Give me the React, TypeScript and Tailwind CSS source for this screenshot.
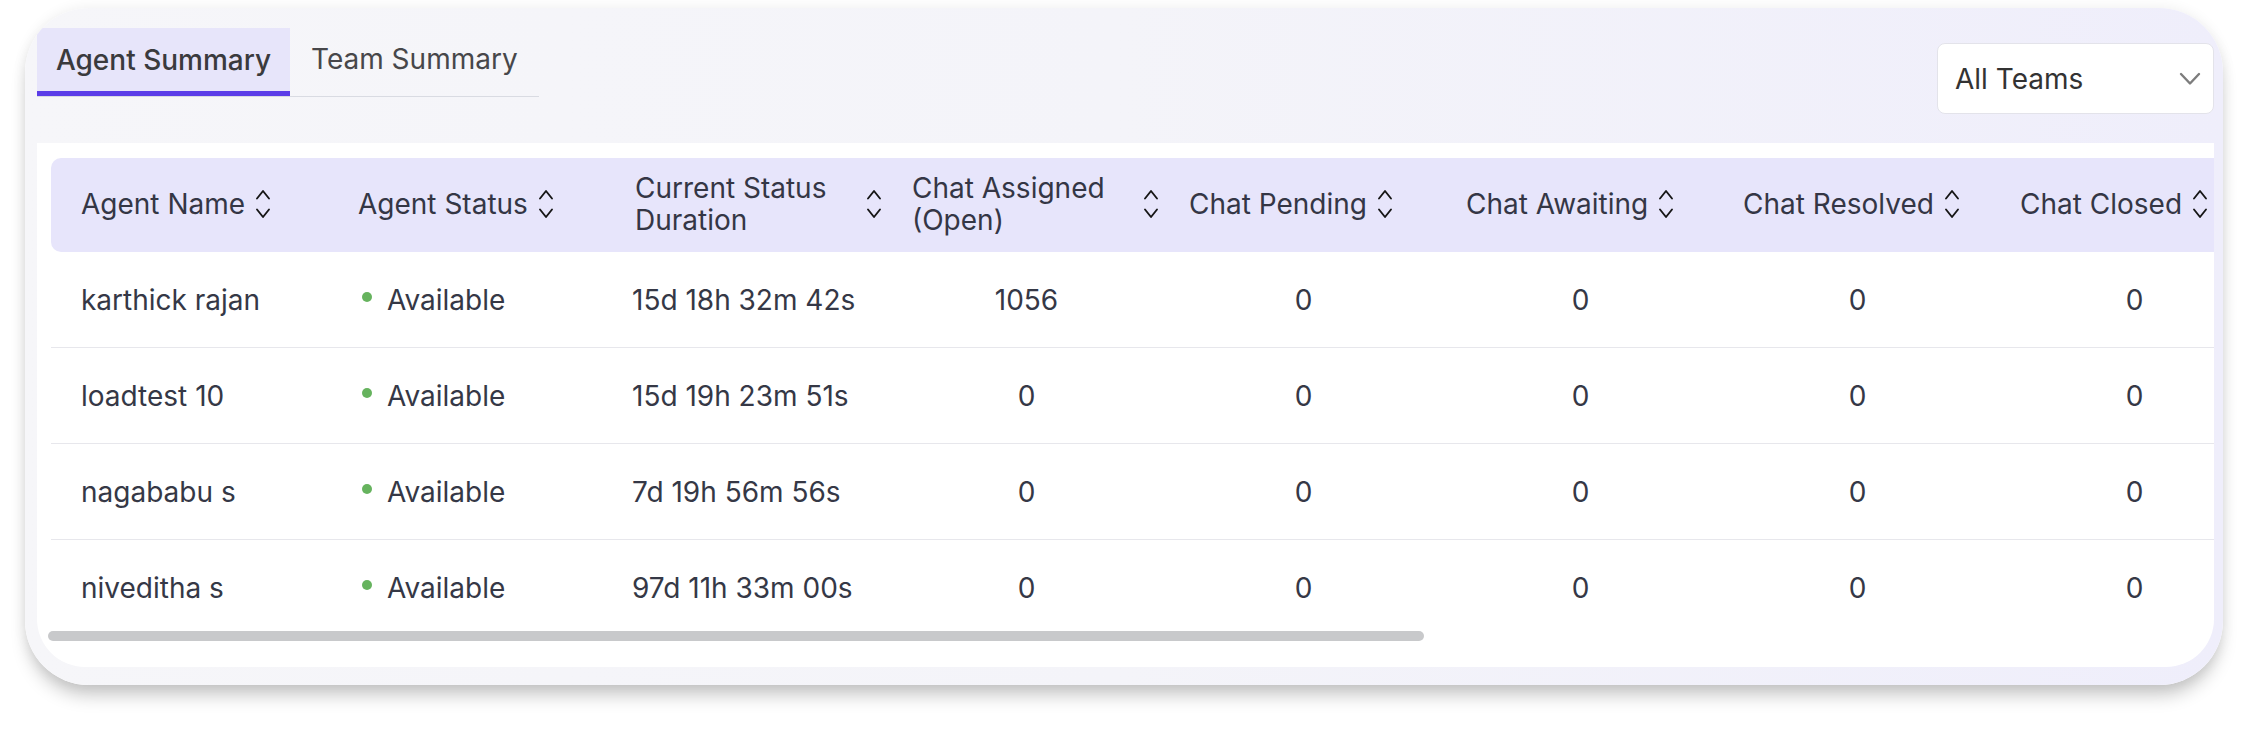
import React from "react";

const headers = [
  "Agent Name",
  "Agent Status",
  "Current Status Duration",
  "Chat Assigned (Open)",
  "Chat Pending",
  "Chat Awaiting",
  "Chat Resolved",
  "Chat Closed",
];

const rows = [
  { name: "karthick rajan", dur: "15d 18h 32m 42s", nums: ["1056", "0", "0", "0", "0"] },
  { name: "loadtest 10", dur: "15d 19h 23m 51s", nums: ["0", "0", "0", "0", "0"] },
  { name: "nagababu s", dur: "7d 19h 56m 56s", nums: ["0", "0", "0", "0", "0"] },
  { name: "niveditha s", dur: "97d 11h 33m 00s", nums: ["0", "0", "0", "0", "0"] },
];

function SortIcon() {
  return (
    <svg width="16" height="30" viewBox="0 0 16 30" className="shrink-0" fill="none">
      <path d="M2 9.5 L8 2 L14 9.5" stroke="#161616" strokeWidth="1.9" strokeLinecap="round" strokeLinejoin="round" />
      <path d="M2 20.5 L8 28 L14 20.5" stroke="#161616" strokeWidth="1.9" strokeLinecap="round" strokeLinejoin="round" />
    </svg>
  );
}

export default function App() {
  return (
    <div className="w-[2251px] h-[730px] bg-white pt-[8px] pl-[25px] font-['Inter','Noto_Sans',sans-serif]">
      <div className="w-[2198px] h-[677px] rounded-[64px] overflow-hidden bg-gradient-to-r from-[#f6f6f9] via-[#f4f4f9] to-[#efeefb] shadow-[0_14px_18px_-4px_rgba(0,0,0,0.22),0_0_14px_rgba(0,0,0,0.07)] pt-[20px] pl-[12px] pr-[9px] flex flex-col">
        {/* top row */}
        <div className="flex items-start justify-between h-[86px]">
          <div className="flex border-b border-[#d9dbe2] w-[502px]">
            <div className="h-[68px] w-[253px] bg-[#e7e5fa] border-b-[5px] border-[#5b3de8] -mb-px flex items-center justify-center text-[28px] font-medium text-[#3a3a3d]">
              Agent Summary
            </div>
            <div className="h-[68px] pl-[21px] pb-[6px] flex items-center text-[28px] text-[#47474a]">
              Team Summary
            </div>
          </div>
          <div className="mt-[15px] w-[277px] h-[71px] bg-white border border-[#e3e3ea] rounded-[8px] flex items-center justify-between pl-[17px] pr-[12px] text-[28px] text-[#333]">
            <span>All Teams</span>
            <svg width="22" height="14" viewBox="0 0 22 14" fill="none">
              <path d="M2 2 L11 11.5 L20 2" stroke="#7d7d7d" strokeWidth="2.4" strokeLinecap="round" strokeLinejoin="round" />
            </svg>
          </div>
        </div>

        {/* table panel */}
        <div className="mt-[29px] h-[524px] bg-white rounded-b-[48px] overflow-hidden pt-[15px] pl-[14px]">
          <div className="w-[2216px]">
            <div className="flex h-[94px] bg-[#e7e5fb] rounded-l-[10px] text-[28px] text-[#343645]">
              {headers.map((h) => (
                <div key={h} className="w-[277px] shrink-0 pl-[30px] pb-[3px] flex items-center gap-[10px]">
                  <span className="leading-[32px]">{h}</span>
                  <SortIcon />
                </div>
              ))}
            </div>
            {rows.map((r, i) => (
              <div
                key={r.name}
                className={`flex h-[96px] items-center text-[28px] text-[#353846] ${i < rows.length - 1 ? "border-b border-[#e7e7ec]" : ""}`}
              >
                <div className="w-[277px] shrink-0 pl-[30px]">{r.name}</div>
                <div className="w-[277px] shrink-0 pl-[34px] flex items-center gap-[15px]">
                  <span className="w-[10px] h-[10px] rounded-full bg-[#66b35e] -mt-[6px]" />
                  <span>Available</span>
                </div>
                <div className="w-[277px] shrink-0 pl-[27px]">{r.dur}</div>
                {r.nums.map((n, j) => (
                  <div key={j} className="w-[277px] shrink-0 pl-[12px] text-center">
                    {n}
                  </div>
                ))}
              </div>
            ))}
            <div className="-mt-[5px] ml-[-3px] w-[1376px] h-[10px] rounded-full bg-[#c8c9cb]" />
          </div>
        </div>
      </div>
    </div>
  );
}
